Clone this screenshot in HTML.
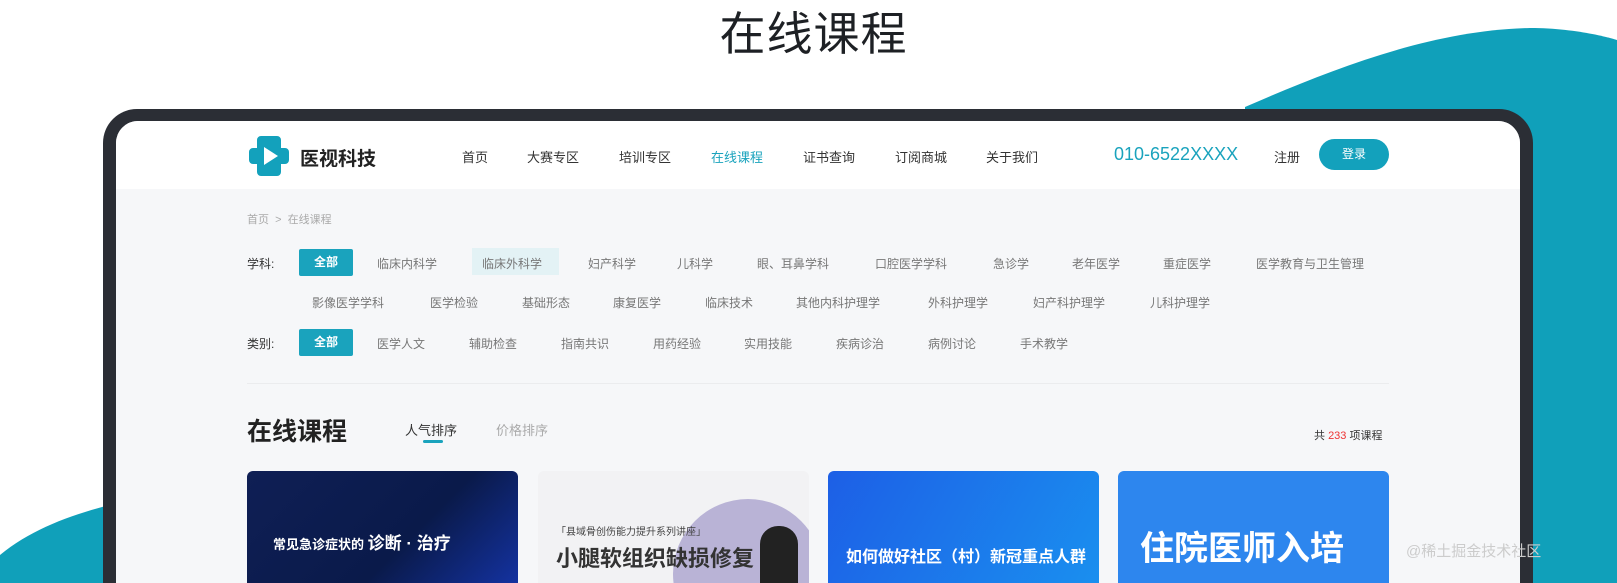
<!DOCTYPE html>
<html style="overflow:hidden;height:583px"><head><meta charset="utf-8"><style>
*{margin:0;padding:0;box-sizing:border-box}
html,body{width:1617px;height:583px;overflow:hidden}
body{background:#fff;position:relative;font-family:"Liberation Sans","Noto Sans CJK SC",sans-serif;color:#333}
.abs{position:absolute}
.title{left:0;width:1617px;top:-2px;text-align:center;font-size:46px;color:#1d2024;letter-spacing:1px;padding-left:10px}
.frame{left:103px;top:109px;width:1430px;height:474px;background:#2b2e35;border-radius:34px 34px 0 0}
.screen{left:116px;top:121px;width:1404px;height:462px;background:#f6f7f9;border-radius:22px 22px 0 0;overflow:hidden}
.hdr{left:0;top:0;width:1404px;height:68px;background:#fff}
.nav{font-size:13px;color:#333;top:26px}
.t{font-size:12px;color:#777}
.chip{background:#1aa3bd;color:#fff;font-weight:bold;font-size:12px;border-radius:2px;width:54px;height:27px;line-height:27px;text-align:center}
.card{top:350px;width:271px;height:112px;border-radius:6px 6px 0 0;overflow:hidden}
</style></head><body>
<svg class="abs" style="left:0;top:0" width="1617" height="583">
<path d="M1245,107 C1330,70 1430,30 1530,28 C1580,28 1617,40 1617,40 L1617,583 L1245,583 Z" fill="#10a0ba"/>
<path d="M0,555 C30,530 70,515 110,505 L110,583 L0,583 Z" fill="#10a0ba"/>
</svg>
<div class="abs title">在线课程</div>
<div class="abs frame"></div>
<div class="abs screen">
 <div class="abs hdr"></div>
 <svg class="abs" style="left:130px;top:12px" width="46" height="46" viewBox="0 0 46 46">
  <path d="M15,3 h16 a4,4 0 0 1 4,4 v8 h4 a4,4 0 0 1 4,4 v8 a4,4 0 0 1 -4,4 h-4 v8 a4,4 0 0 1 -4,4 h-16 a4,4 0 0 1 -4,-4 v-8 h-4 a4,4 0 0 1 -4,-4 v-8 a4,4 0 0 1 4,-4 h4 v-8 a4,4 0 0 1 4,-4z" fill="#13a1bc"/>
  <path d="M18,14 L32,23 L18,32 Z" fill="#fff"/>
 </svg>
 <div class="abs" style="left:184px;top:23px;font-size:19px;font-weight:bold;color:#222">医视科技</div>
 <div class="abs nav" style="left:346px">首页</div>
 <div class="abs nav" style="left:411px">大赛专区</div>
 <div class="abs nav" style="left:503px">培训专区</div>
 <div class="abs nav" style="left:595px;color:#1aa3bd">在线课程</div>
 <div class="abs nav" style="left:687px">证书查询</div>
 <div class="abs nav" style="left:779px">订阅商城</div>
 <div class="abs nav" style="left:870px">关于我们</div>
 <div class="abs" style="left:998px;top:23px;font-size:18px;color:#1aa3bd">010-6522XXXX</div>
 <div class="abs nav" style="left:1158px">注册</div>
 <div class="abs" style="left:1203px;top:18px;width:70px;height:31px;border-radius:16px;background:#13a1bc;color:#fff;font-size:12px;line-height:31px;text-align:center">登录</div>
 <div class="abs" style="left:131px;top:90px;font-size:11px;color:#aaa">首页 &nbsp;&gt;&nbsp; 在线课程</div>
 <div class="abs t" style="left:131px;top:134px;color:#333">学科:</div>
 <div class="abs chip" style="left:183px;top:128px">全部</div>
 <div class="abs t" style="left:261px;top:134px">临床内科学</div>
 <div class="abs" style="left:356px;top:127px;width:87px;height:27px;background:#e3f2f5"></div>
 <div class="abs t" style="left:366px;top:134px">临床外科学</div>
 <div class="abs t" style="left:472px;top:134px">妇产科学</div>
 <div class="abs t" style="left:561px;top:134px">儿科学</div>
 <div class="abs t" style="left:641px;top:134px">眼、耳鼻学科</div>
 <div class="abs t" style="left:759px;top:134px">口腔医学学科</div>
 <div class="abs t" style="left:877px;top:134px">急诊学</div>
 <div class="abs t" style="left:956px;top:134px">老年医学</div>
 <div class="abs t" style="left:1047px;top:134px">重症医学</div>
 <div class="abs t" style="left:1140px;top:134px">医学教育与卫生管理</div>
 <div class="abs t" style="left:196px;top:173px">影像医学学科</div>
 <div class="abs t" style="left:314px;top:173px">医学检验</div>
 <div class="abs t" style="left:406px;top:173px">基础形态</div>
 <div class="abs t" style="left:497px;top:173px">康复医学</div>
 <div class="abs t" style="left:589px;top:173px">临床技术</div>
 <div class="abs t" style="left:680px;top:173px">其他内科护理学</div>
 <div class="abs t" style="left:812px;top:173px">外科护理学</div>
 <div class="abs t" style="left:917px;top:173px">妇产科护理学</div>
 <div class="abs t" style="left:1034px;top:173px">儿科护理学</div>
 <div class="abs t" style="left:131px;top:214px;color:#333">类别:</div>
 <div class="abs chip" style="left:183px;top:208px">全部</div>
 <div class="abs t" style="left:261px;top:214px">医学人文</div>
 <div class="abs t" style="left:353px;top:214px">辅助检查</div>
 <div class="abs t" style="left:445px;top:214px">指南共识</div>
 <div class="abs t" style="left:537px;top:214px">用药经验</div>
 <div class="abs t" style="left:628px;top:214px">实用技能</div>
 <div class="abs t" style="left:720px;top:214px">疾病诊治</div>
 <div class="abs t" style="left:812px;top:214px">病例讨论</div>
 <div class="abs t" style="left:904px;top:214px">手术教学</div>
 <div class="abs" style="left:131px;top:262px;width:1142px;height:1px;background:#ebecee"></div>
 <div class="abs" style="left:131px;top:291px;font-size:25px;font-weight:bold;color:#222">在线课程</div>
 <div class="abs" style="left:289px;top:299px;font-size:13px;color:#333">人气排序</div>
 <div class="abs" style="left:307px;top:319px;width:20px;height:3px;background:#1aa3bd;border-radius:2px"></div>
 <div class="abs" style="left:380px;top:299px;font-size:13px;color:#aaa">价格排序</div>
 <div class="abs" style="left:1198px;top:306px;font-size:11px;color:#333">共 <span style="color:#e33">233</span> 项课程</div>
 <div class="abs card" style="left:131px;background:linear-gradient(135deg,#0f1f55,#0a1a4a 60%,#1432a0)">
  <div class="abs" style="left:26px;top:58px;color:#fff;font-weight:bold;font-size:13px;white-space:nowrap">常见急诊症状的 <span style="font-size:17px">诊断 · 治疗</span></div>
 </div>
 <div class="abs card" style="left:422px;background:#f2f2f4">
  <div class="abs" style="left:135px;top:28px;width:150px;height:150px;border-radius:50%;background:#b9b3d6"></div>
  <div class="abs" style="left:222px;top:55px;width:38px;height:60px;border-radius:18px 18px 0 0;background:#222"></div>
  <div class="abs" style="left:18px;top:52px;font-size:10px;color:#444">「县域骨创伤能力提升系列讲座」</div>
  <div class="abs" style="left:18px;top:70px;font-size:22px;font-weight:bold;color:#333;white-space:nowrap">小腿软组织缺损修复</div>
 </div>
 <div class="abs card" style="left:712px;background:linear-gradient(120deg,#1d5fe6,#1a8fef)">
  <div class="abs" style="left:18px;top:72px;color:#fff;font-weight:bold;font-size:16px;white-space:nowrap">如何做好社区（村）新冠重点人群</div>
 </div>
 <div class="abs card" style="left:1002px;background:#2d86ee">
  <div class="abs" style="left:22px;top:50px;color:#fff;font-weight:bold;font-size:34px;white-space:nowrap">住院医师入培</div>
 </div>
</div>
<div class="abs" style="left:1406px;top:540px;font-size:15px;color:#ccc">@稀土掘金技术社区</div>
</body></html>
